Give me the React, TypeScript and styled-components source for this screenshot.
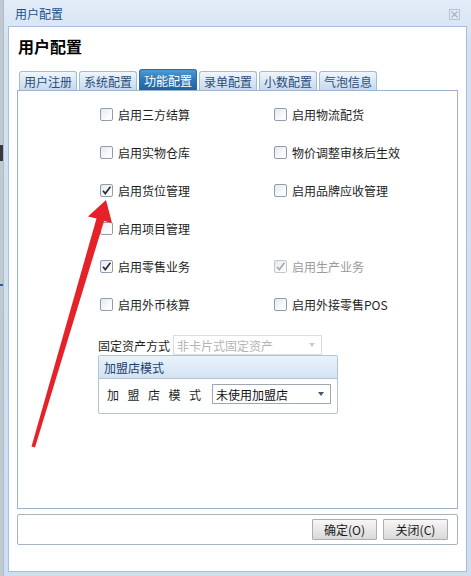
import styled, { createGlobalStyle } from 'styled-components';

const GlobalStyle = createGlobalStyle`
  html, body {
    margin: 0;
    padding: 0;
    background: #c5cad0;
  }
  body {
    font-family: 'Noto Sans CJK SC', 'Microsoft YaHei', sans-serif;
    font-size: 12px;
    color: #1e1e1e;
  }
`;

const Page = styled.div`
  position: relative;
  width: 471px;
  height: 576px;
  display: flex;
  overflow: hidden;
`;

const Backdrop = styled.div`
  width: 3px;
  background: #c3c8ce;
  position: relative;
  &::before {
    content: '';
    position: absolute;
    left: 0;
    top: 145px;
    width: 3px;
    height: 16px;
    background: #3a3a3a;
  }
  &::after {
    content: '';
    position: absolute;
    left: 0;
    top: 284px;
    width: 3px;
    height: 2px;
    background: #2c5aa8;
  }
`;

const Window = styled.div`
  flex: 1;
  display: flex;
  flex-direction: column;
  background: linear-gradient(#e3edf8, #d3e2f2 40px, #cddef0);
  border-left: 1px solid #a9bdd2;
  padding: 0 4px 4px 4px;
`;

const TitleBar = styled.div`
  height: 26px;
  flex-shrink: 0;
  display: flex;
  align-items: center;
  justify-content: space-between;
  padding: 0 7px 0 7px;
  color: #1d4f8f;
  font-size: 12px;
`;

const CloseIcon = styled.svg`
  width: 11px;
  height: 11px;
  margin-top: 3px;
`;

const Client = styled.div`
  flex: 1;
  background: #fff;
  border: 1px solid #a8bed6;
  display: flex;
  flex-direction: column;
  padding: 0 8px 0 8px;
`;

const Heading = styled.div`
  flex-shrink: 0;
  font-size: 16px;
  font-weight: bold;
  color: #000;
  height: 44px;
  display: flex;
  align-items: center;
  padding-left: 1px;
  padding-bottom: 6px;
  box-sizing: border-box;
`;

const TabStrip = styled.div`
  flex-shrink: 0;
  display: flex;
  gap: 2px;
  padding-left: 2px;
  height: 19px;
  align-items: flex-end;
`;

const Tab = styled.div<{ $active?: boolean }>`
  height: ${(p) => (p.$active ? 21 : 19)}px;
  width: 58px;
  display: flex;
  align-items: center;
  justify-content: center;
  border: 1px solid ${(p) => (p.$active ? '#2a6aa6' : '#a3bcd5')};
  border-bottom: none;
  border-radius: 3px 3px 0 0;
  font-size: 12px;
  color: ${(p) => (p.$active ? '#fff' : '#2b4d78')};
  background: ${(p) =>
    p.$active
      ? 'linear-gradient(#4e9ad4, #2e77b8 50%, #1e64a4)'
      : 'linear-gradient(#f1f6fc, #d9e7f5 50%, #c6daee)'};
  box-sizing: border-box;
`;

const TabPanel = styled.div`
  flex-shrink: 0;
  height: 419px;
  border: 1px solid #9bb4cc;
  box-sizing: border-box;
  padding: 13px 0 0 82px;
  display: flex;
  flex-direction: column;
`;

const CheckGrid = styled.div`
  display: grid;
  grid-template-columns: 174px 174px;
  grid-auto-rows: 20px;
  row-gap: 18px;
`;

const CheckItem = styled.label<{ $disabled?: boolean }>`
  display: flex;
  align-items: center;
  gap: 5px;
  font-size: 12px;
  color: ${(p) => (p.$disabled ? '#9a9a9a' : '#1e1e1e')};
`;

const Box = styled.span<{ $disabled?: boolean }>`
  width: 13px;
  height: 13px;
  box-sizing: border-box;
  border: 1px solid ${(p) => (p.$disabled ? '#c2c8ce' : '#8f9daf')};
  border-radius: 2px;
  background: linear-gradient(135deg, #e4e8ee, #f8f9fb 60%, #ffffff);
  display: flex;
  align-items: center;
  justify-content: center;
`;

const Check = ({ checked, disabled }: { checked?: boolean; disabled?: boolean }) => (
  <Box $disabled={disabled}>
    {checked && (
      <svg width="11" height="11" viewBox="0 0 11 11">
        <path
          d="M2 5.8 L4.3 8.6 L9.4 1.8"
          fill="none"
          stroke={disabled ? '#a7adb3' : '#2a2f36'}
          strokeWidth="1.7"
        />
      </svg>
    )}
  </Box>
);

const AssetRow = styled.div`
  display: flex;
  align-items: center;
  margin-top: 21px;
  margin-left: -2px;
  height: 20px;
  gap: 3px;
`;

const FieldLabel = styled.span`
  font-size: 12px;
  color: #1e1e1e;
`;

const Combo = styled.div<{ $disabled?: boolean; $width: number }>`
  width: ${(p) => p.$width}px;
  height: 20px;
  box-sizing: border-box;
  border: 1px solid ${(p) => (p.$disabled ? '#dadde1' : '#9fa7b1')};
  background: #fff;
  display: flex;
  align-items: center;
  justify-content: space-between;
  padding: 0 6px 0 3px;
  font-size: 12px;
  color: ${(p) => (p.$disabled ? '#b4b4b4' : '#111')};
`;

const Arrow = styled.span<{ $disabled?: boolean }>`
  width: 0;
  height: 0;
  border-left: 3px solid transparent;
  border-right: 3px solid transparent;
  border-top: 4px solid ${(p) => (p.$disabled ? '#c8ccd0' : '#3d5a80')};
`;

const Fieldset = styled.div`
  width: 240px;
  margin-left: -2px;
  border: 1px solid #b3c4d6;
  border-radius: 2px;
  box-sizing: border-box;
`;

const FieldsetHead = styled.div`
  height: 22px;
  display: flex;
  align-items: center;
  padding-left: 5px;
  background: linear-gradient(#eaf2fb, #d3e3f4);
  border-bottom: 1px solid #b3c4d6;
  color: #1d3f6b;
  font-size: 12px;
`;

const FieldsetBody = styled.div`
  display: flex;
  align-items: center;
  padding: 5px 6px 9px 8px;
  gap: 1px;
`;

const Spaced = styled.span`
  letter-spacing: 8.5px;
  font-size: 12px;
  color: #1e1e1e;
  width: 104px;
  white-space: nowrap;
`;

const ButtonBar = styled.div`
  flex-shrink: 0;
  margin-top: 5px;
  height: 31px;
  border: 1px solid #a6b3c0;
  border-radius: 2px;
  box-sizing: border-box;
  display: flex;
  justify-content: flex-end;
  align-items: center;
  gap: 6px;
  padding-right: 9px;
`;

const Button = styled.button`
  width: 65px;
  height: 21px;
  border: 1px solid #adadad;
  background: linear-gradient(#f7f7f7, #e8e8e8 50%, #d9d9d9);
  font-family: inherit;
  font-size: 12px;
  color: #1a1a1a;
  padding: 0;
  border-radius: 1px;
`;

const Annotation = styled.svg`
  position: absolute;
  left: 0;
  top: 0;
  pointer-events: none;
`;

const leftChecks = [
  { label: '启用三方结算' },
  { label: '启用实物仓库' },
  { label: '启用货位管理', checked: true },
  { label: '启用项目管理' },
  { label: '启用零售业务', checked: true },
  { label: '启用外币核算' },
];

const rightChecks = [
  { label: '启用物流配货' },
  { label: '物价调整审核后生效' },
  { label: '启用品牌应收管理' },
  null,
  { label: '启用生产业务', checked: true, disabled: true },
  { label: '启用外接零售POS' },
];

const tabs = ['用户注册', '系统配置', '功能配置', '录单配置', '小数配置', '气泡信息'];

export default function App() {
  const cells: ({ label: string; checked?: boolean; disabled?: boolean } | null)[] = [];
  leftChecks.forEach((l, i) => {
    cells.push(l);
    cells.push(rightChecks[i]);
  });

  return (
    <Page>
      <GlobalStyle />
      <Backdrop />
      <Window>
        <TitleBar>
          <span>用户配置</span>
          <CloseIcon viewBox="0 0 11 11">
            <rect x="0.5" y="0.5" width="10" height="10" fill="none" stroke="#b9c3cf" />
            <path d="M2.5 2.5 L8.5 8.5 M8.5 2.5 L2.5 8.5" stroke="#a9b4c2" strokeWidth="1.2" />
          </CloseIcon>
        </TitleBar>
        <Client>
          <Heading>用户配置</Heading>
          <TabStrip>
            {tabs.map((t) => (
              <Tab key={t} $active={t === '功能配置'}>
                {t}
              </Tab>
            ))}
          </TabStrip>
          <TabPanel>
            <CheckGrid>
              {cells.map((c, i) =>
                c ? (
                  <CheckItem key={i} $disabled={c.disabled}>
                    <Check checked={c.checked} disabled={c.disabled} />
                    {c.label}
                  </CheckItem>
                ) : (
                  <span key={i} />
                )
              )}
            </CheckGrid>
            <AssetRow>
              <FieldLabel>固定资产方式</FieldLabel>
              <Combo $disabled $width={149}>
                非卡片式固定资产
                <Arrow $disabled />
              </Combo>
            </AssetRow>
            <Fieldset>
              <FieldsetHead>加盟店模式</FieldsetHead>
              <FieldsetBody>
                <Spaced>加盟店模式</Spaced>
                <Combo $width={119}>
                  未使用加盟店
                  <Arrow />
                </Combo>
              </FieldsetBody>
            </Fieldset>
          </TabPanel>
          <ButtonBar>
            <Button>确定(O)</Button>
            <Button>关闭(C)</Button>
          </ButtonBar>
        </Client>
      </Window>
      <Annotation width="471" height="576" viewBox="0 0 471 576">
        <path
          d="M106 200 L112 223 L104 221 L35 447.5 L31.5 446.5 L96.5 218.5 L88 216.5 Z"
          fill="#e5222a"
        />
      </Annotation>
    </Page>
  );
}
